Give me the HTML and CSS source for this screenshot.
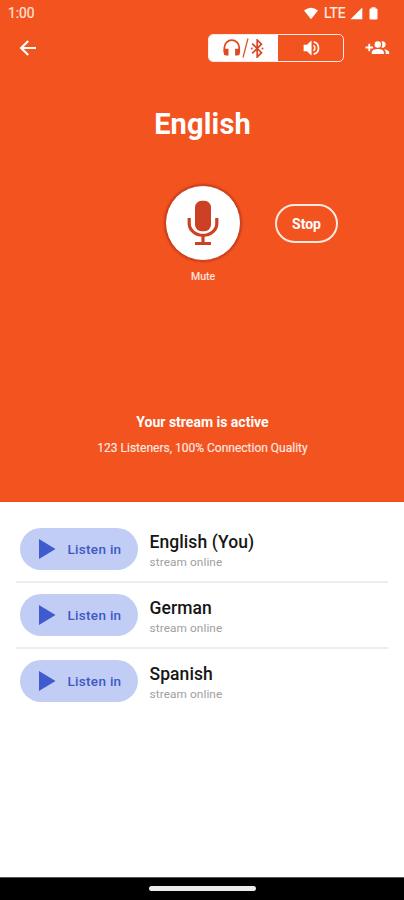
FILE: index.html
```
<!DOCTYPE html>
<html lang="en">
<head>
<meta charset="utf-8">
<title>Stream</title>
<link rel="stylesheet" href="styles.css">
</head>
<body>
<div class="screen">
  <section class="hero">
    <div class="status">
      <span class="time">1:00</span>
      <div class="signals">
        <svg width="16" height="13" viewBox="0 0 16 13"><path d="M1 3.6Q8-2 15 3.6L8 12.2Z"/></svg>
        <span class="lte">LTE</span>
        <svg class="cell" width="13" height="13" viewBox="0 0 13 13"><path d="M12.3.5V12.2H.5Z"/></svg>
        <svg class="battery" width="9" height="13" viewBox="0 0 9 13"><path d="M2.5.3h4v1.3h1q1 0 1 1v9q0 1-1 1h-6q-1 0-1-1v-9q0-1 1-1h1z"/></svg>
      </div>
    </div>
    <header class="toolbar">
      <svg class="back" width="24" height="24" viewBox="0 0 24 24"><path d="M20 12H5.8M12.2 5l-7 7 7 7"/></svg>
      <div class="output">
        <div class="option selected">
          <svg width="18" height="18" viewBox="0 0 18 18"><path class="line" d="M1.4 13V8.5a7.4 7.4 0 0 1 14.8 0V13"/><path d="M.7 9.8h4.8v6.7H3q-2.3 0-2.3-2.2zM12.1 9.8h4.8v4.5q0 2.2-2.3 2.2h-2.5z"/></svg>
          <svg width="7" height="22" viewBox="0 0 7 22"><path class="slash" d="M6 1.5 1 20.5"/></svg>
          <svg width="15" height="19" viewBox="0 0 15 19"><path class="blue" d="m2.2 4.7 9.3 9L7.2 18V1l4.3 4.2-9.3 9.2"/><circle cx="1.8" cy="9.5" r="1"/><circle cx="12.5" cy="9.5" r="1"/></svg>
        </div>
        <div class="option">
          <svg width="18" height="18" viewBox="0 0 20 20"><path d="M1.8 6.5h3.6L10.6 1.8v16.4L5.4 13.5H1.8z"/><path class="wave" d="M12.8 7q3 3 0 6M13 3.2a7 7 0 0 1 0 13.6"/></svg>
        </div>
      </div>
      <svg class="people" width="25" height="16" viewBox="0 0 25 16"><path class="plus" d="M.5 7.5h7.6M4.3 3.7v7.6"/><circle cx="12.8" cy="4.5" r="3.2"/><path d="M6.7 14v-1.4c0-2.4 3-3.5 6.1-3.5s6.1 1.1 6.1 3.5V14zM16.4 1.5a3.2 3.2 0 1 1 0 6q1.8-3 0-6zM19 9.2c3 .4 5.2 1.5 5.2 3.4V14h-3.5v-1.4q0-2-1.7-3.4z"/></svg>
    </header>
    <h1>English</h1>
    <div class="controls">
      <div class="mute">
        <div class="mic">
          <svg width="32" height="48" viewBox="0 0 32 48"><rect x="8" y="1.8" width="16" height="30.4" rx="6.5"/><path d="M2.2 19v5.5a13.8 11.8 0 0 0 27.6 0V19M16 36v8M8 44.5h16"/></svg>
        </div>
        <span>Mute</span>
      </div>
      <div class="stop">Stop</div>
    </div>
    <p class="active">Your stream is active</p>
    <p class="quality">123 Listeners, 100% Connection Quality</p>
  </section>
  <main class="streams">
    <div class="row">
      <div class="listen"><svg width="17" height="20" viewBox="0 0 17 20"><path d="M0 0 16.5 10 0 20z"/></svg><span>Listen in</span></div>
      <div class="info"><h2>English (You)</h2><p>stream online</p></div>
    </div>
    <div class="row">
      <div class="listen"><svg width="17" height="20" viewBox="0 0 17 20"><path d="M0 0 16.5 10 0 20z"/></svg><span>Listen in</span></div>
      <div class="info"><h2>German</h2><p>stream online</p></div>
    </div>
    <div class="row">
      <div class="listen"><svg width="17" height="20" viewBox="0 0 17 20"><path d="M0 0 16.5 10 0 20z"/></svg><span>Listen in</span></div>
      <div class="info"><h2>Spanish</h2><p>stream online</p></div>
    </div>
  </main>
  <footer class="navbar"><div class="handle"></div></footer>
</div>
</body>
</html>
```
FILE: styles.css
```
* { box-sizing: border-box; }
body, h1, h2, p { margin: 0; }
body { font-family: Roboto, sans-serif; background: #fff; }
svg { display: block; flex: none; }
.screen { width: 404px; height: 900px; display: flex; flex-direction: column; overflow: hidden; }
.hero { height: 502px; background: #f3531f; border-bottom: 1px solid #e8501c; color: #fff; display: flex; flex-direction: column; }
.status { height: 26px; padding: 0 26px 0 8px; display: flex; justify-content: space-between; align-items: center; fill: #fff; }
.time { font-size: 13.8px; line-height: 26px; color: #ffe6de; -webkit-text-stroke: .2px #ffe6de; }
.signals { display: flex; align-items: center; }
.lte { font-size: 13.8px; line-height: 16px; width: 23px; margin: 0 4px 0 5px; color: #ffece6; -webkit-text-stroke: .2px #ffece6; }
.cell { margin-left: -1px; }
.battery { margin-left: 6px; }
.toolbar { height: 44px; padding: 0 14px 0 16px; display: flex; align-items: center; }
.back { fill: none; stroke: #fff; stroke-width: 2.2; }
.output { width: 136px; height: 28px; margin-left: 168px; border: 1.5px solid #ffe9e1; border-radius: 5px; display: flex; overflow: hidden; }
.option { flex: 1; display: flex; align-items: center; justify-content: center; fill: #fff; }
.selected { flex: 0 0 69px; background: #fff; fill: #e04a22; gap: 1px; padding-left: 1px; }
.line { fill: none; stroke: #e04a22; stroke-width: 1.8; }
.slash { fill: none; stroke: #e04a22; stroke-width: 1.2; }
.blue { fill: none; stroke: #d94524; stroke-width: 1.7; }
.wave { fill: none; stroke: #fff; stroke-width: 1.8; }
.people { margin-left: auto; fill: #fff; }
.plus { stroke: #fff; stroke-width: 1.8; }
h1 { margin-top: 34px; font-size: 29px; line-height: 40px; font-weight: 700; text-align: center; letter-spacing: .15px; padding-left: 1px; }
.controls { margin-top: 40px; display: grid; grid-template-columns: 165px 76px 1fr; }
.mute { grid-column: 2; display: flex; flex-direction: column; align-items: center; font-size: 10.5px; line-height: 14px; }
.mute span { margin-top: 9px; color: #ffe9e1; -webkit-text-stroke: .2px #ffe9e1; }
.mic { width: 76px; height: 76px; margin-top: 1px; border: 1.5px solid #c73e1c; border-radius: 50%; background: #fff; display: flex; align-items: center; justify-content: center; box-shadow: 0 0 2px 1px #c43a18; }
.mic rect { fill: #cc4123; }
.mic path { fill: none; stroke: #cc4123; stroke-width: 3.2; }
.stop { margin: 20px 0 0 34px; width: 63px; height: 39px; border: 2px solid #ffe9e1; border-radius: 20px; font-size: 14px; font-weight: 700; line-height: 37px; text-align: center; }
.active { margin-top: 128px; font-size: 14px; line-height: 20px; font-weight: 700; text-align: center; }
.quality { margin-top: 6px; font-size: 12px; line-height: 20px; text-align: center; color: #ffe9e1; -webkit-text-stroke: .15px #ffe9e1; }
.active, .quality { padding-left: 1px; }
.streams { padding: 15px 16px 0; flex: 1; }
.row { height: 66px; border-bottom: 2px solid #ededed; display: flex; align-items: center; }
.row:last-child { border-bottom-color: transparent; }
.listen { width: 118px; height: 42px; margin: 0 0 1px 3.5px; border-radius: 21px; background: #c1cdf4; color: #4058c8; display: flex; align-items: center; padding-left: 19.5px; font-size: 13.5px; font-weight: 500; letter-spacing: .3px; white-space: nowrap; }
.listen svg { fill: #405bce; margin-right: 11.5px; }
.listen span { padding-top: 1px; }
.info { margin-left: 12px; padding-top: 5px; }
.info h2 { font-size: 17.5px; line-height: 21px; font-weight: 500; letter-spacing: .08px; color: #161616; }
.info p { font-size: 11.8px; line-height: 18px; letter-spacing: .1px; color: #a0a0a0; }
.navbar { height: 23px; background: #000; border-top: 1px solid #555; display: flex; justify-content: center; padding-top: 8px; }
.handle { width: 107px; height: 5px; margin-left: 1px; border-radius: 3px; background: #ececec; }
```
